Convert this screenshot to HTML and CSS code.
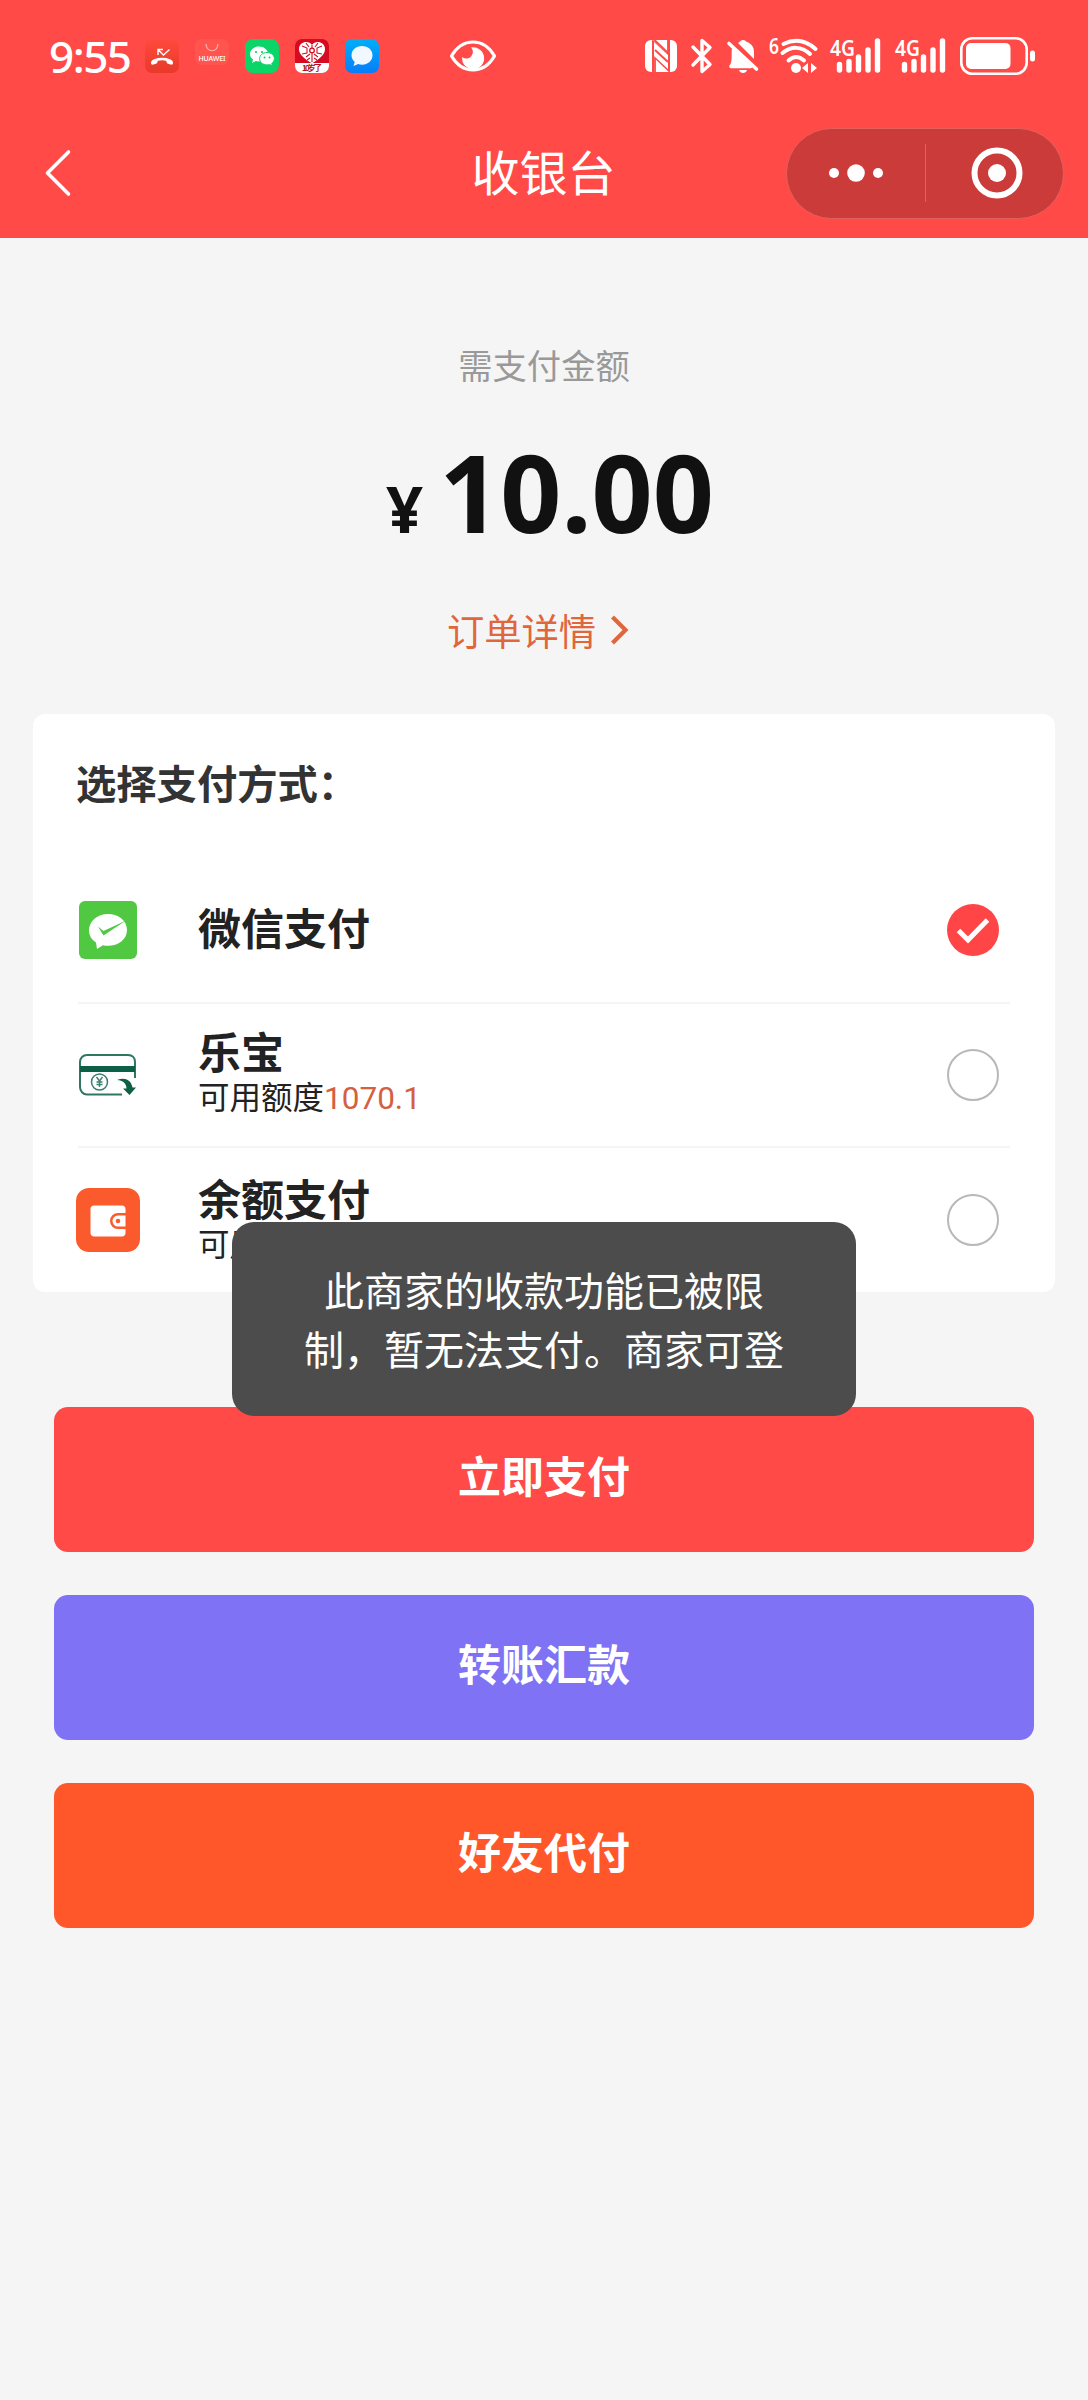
FILE: index.html
```html
<!DOCTYPE html>
<html lang="zh-CN">
<head>
<meta charset="utf-8">
<title>收银台</title>
<link rel="stylesheet" href="styles.css">
</head>
<body>
<header class="top">
  <div class="status">
    <span class="time">9:55</span>
    <div class="apps">
      <svg width="34" height="34" viewBox="0 0 34 34"><defs><linearGradient id="call" x2="0" y2="1"><stop offset="0" stop-color="#ff4a3c"/><stop offset="1" stop-color="#e8392a"/></linearGradient></defs><rect width="34" height="34" rx="7" fill="url(#call)"/><path d="M13 16V10.500h5M13.500 11l5 5 6-5.500" fill="none" stroke="#fff" stroke-width="1.400"/><path d="M6 24c0-2 1-3 3-3.800 5-1.800 11-1.800 16 0 2 .8 3 1.800 3 3.800 0 1.500-1 2-2.500 1.600l-2.500-.8c-1.500-.5-1.500-2.500-2-3-2.500-.8-5.500-.8-8 0-.5.5-.5 2.500-2 3l-2.500.8C7 26 6 25.500 6 24z" fill="#fff"/></svg>
      <svg width="34" height="34" viewBox="0 0 34 34"><rect width="34" height="26" rx="7" fill="#ff554e"/><path d="M11 5c1 9 11 9 12 0" fill="none" stroke="#ffb5b0" stroke-width="1.200"/><text class="brand" x="17" y="22" text-anchor="middle" textLength="27">HUAWEI</text></svg>
      <svg width="34" height="34" viewBox="0 0 34 34"><rect width="34" height="34" rx="8" fill="#0bd468"/><path d="M14 7.500c-5 0-9 3.300-9 7.500 0 2.300 1.200 4.200 3 5.600L7.200 24l3.500-1.900c1 .3 2.100.4 3.300.4 5 0 9-3.300 9-7.500s-4-7.500-9-7.500z" fill="#fff"/><path d="M22 13.500c-4.200 0-7.400 2.700-7.400 6.200s3.200 6.200 7.400 6.200c.9 0 1.800-.1 2.600-.4l2.800 1.500-.7-2.600c1.700-1.200 2.700-2.800 2.700-4.700 0-3.500-3.200-6.200-7.400-6.200z" fill="#fff" stroke="#0bd468"/><g fill="#0bd468"><circle cx="11" cy="13" r="1.100"/><circle cx="17" cy="13" r="1.100"/><circle cx="19.500" cy="18.500" r="1"/><circle cx="24.500" cy="18.500" r="1"/></g></svg>
      <svg width="34" height="34" viewBox="0 0 34 34"><rect width="34" height="34" rx="7" fill="#d60a20"/><path d="M0 24h34v3a7 7 0 0 1-7 7H7a7 7 0 0 1-7-7z" fill="#fff"/><path d="M17 6c3-5 13-3.500 13 4 0 6-6 10-13 14.500C10 20 4 16 4 10 4 2.500 14 1 17 6z" fill="#fff"/><path d="M17 6v4M17 14v9M7 7l5 2v5l-5 1M27 7l-5 2v5l5 1M11 4l3 4M23 4l-3 4M11 18l4-3M23 18l-4-3M12 21l3-2M22 21l-3-2" fill="none" stroke="#d60a20" stroke-width="1.100"/><circle cx="17" cy="11.500" r="2.300" fill="#fff" stroke="#d60a20" stroke-width="1.300"/><text class="badge" x="17" y="31.500" text-anchor="middle" textLength="20">10岁了</text></svg>
      <svg width="34" height="34" viewBox="0 0 34 34"><defs><linearGradient id="msg" x2="0" y2="1"><stop offset="0" stop-color="#00aef8"/><stop offset="1" stop-color="#087dfa"/></linearGradient></defs><rect width="34" height="34" rx="7" fill="url(#msg)"/><path d="M17 7c-6 0-10.500 4-10.500 9.300 0 3 1.300 5 3.200 6.700L8.500 27l4.700-1.900c1.200.4 2.500.6 3.800.6 6 0 10.500-4 10.500-9.400S23 7 17 7z" fill="#f1f8ff"/></svg>
    </div>
    <svg class="eye" width="48" height="34" viewBox="0 0 48 34"><path d="M2.500 17C8 7.500 15.500 3 24 3s16 4.500 21.500 14C40 26.500 32.500 31 24 31S8 26.500 2.500 17z" fill="none" stroke="#fff" stroke-width="3.200" stroke-linejoin="round"/><path d="M22 8.500a11 11 0 1 1-8.800 9.500 9 9 0 0 0 2.300 1.200 6.500 6.500 0 0 0 6.500-10.700z" fill="#fff"/></svg>
    <div class="signals">
      <svg class="nfc" width="32" height="34" viewBox="0 0 32 34"><rect y="1" width="32" height="32" rx="6" fill="#fff"/><path d="M8 33V2L23 16.500V1" fill="none" stroke="#ff4a48" stroke-width="1.800"/><path d="M9.500 1L24 15V32L10 18.500V33" fill="none" stroke="#ff4a48" stroke-width="1.800"/><path d="M9 3l14 13v14L9 17z" fill="#fff"/><path d="M8 2v31M24 1v31M10 11l13 12" fill="none" stroke="#ff4a48" stroke-width="2"/></svg>
      <svg class="bt" width="24" height="36" viewBox="0 0 24 36"><path d="M3 9l17 17.500-8 7V2.500l8 7L3 27" fill="none" stroke="#fff" stroke-width="3.400" stroke-linejoin="round" stroke-linecap="round"/></svg>
      <svg class="bell" width="32" height="36" viewBox="0 0 32 36"><path d="M5 10C4 17 6 22 2.500 28H24z" fill="#fff"/><path d="M11 5c2-1.500 3-3 5-3s2.500 1 3.500 1.800c5 1.700 7.500 5.500 7.500 10.200v7z" fill="#fff"/><path d="M12 32h8c-.8 4-7.200 4-8 0z" fill="#fff"/><path d="M2 5.500L29.500 31" stroke="#fff" stroke-width="3.600" stroke-linecap="round"/><path d="M4 28.500h20" stroke="#fff" stroke-width="3.500" stroke-linecap="round"/><path d="M5.500 4L31 27.500" stroke="#ff4a48" stroke-width="2"/></svg>
      <svg class="wifi" width="52" height="38" viewBox="0 0 52 38"><text class="net" x="0" y="17" textLength="10" lengthAdjust="spacingAndGlyphs">6</text><g fill="none" stroke="#fff" stroke-width="4" stroke-linecap="round"><path d="M14.500 7c10.500-5 22-4 32 5"/><path d="M13.500 16c8.500-7 19-7 27.500 1"/><path d="M19.500 23.500c5-4.500 10.500-4.500 15.500 0"/></g><circle cx="27" cy="31" r="5" fill="#fff"/><path d="M39 26v10l-6-5zM42 26v10l6-5z" fill="#fff"/></svg>
      <svg class="cell" width="54" height="38" viewBox="0 0 54 38"><text class="net" x="1" y="18.500" textLength="25" lengthAdjust="spacingAndGlyphs">4G</text><path d="M10.500 27.500V33M20 24.500V33M29.500 20V33M39 13V33M48.500 4V33" stroke="#fff" stroke-width="5.400" stroke-linecap="round"/></svg>
      <svg class="cell" width="54" height="38" viewBox="0 0 54 38"><text class="net" x="1" y="18.500" textLength="25" lengthAdjust="spacingAndGlyphs">4G</text><path d="M10.500 27.500V33M20 24.500V33M29.500 20V33M39 13V33M48.500 4V33" stroke="#fff" stroke-width="5.400" stroke-linecap="round"/></svg>
      <svg class="battery" width="76" height="38" viewBox="0 0 76 38"><rect x="1.300" y="1.300" width="65.400" height="35.400" rx="11" fill="none" stroke="#fff" stroke-width="2.600"/><rect x="6" y="6" width="44.500" height="26" rx="5" fill="#fff"/><rect x="70" y="13.500" width="5" height="11" rx="2.500" fill="#fff"/></svg>
    </div>
  </div>
  <nav class="nav">
    <svg class="back" width="28" height="48" viewBox="0 0 28 48"><path d="M25.500 3L4.500 24l21 21" fill="none" stroke="#fff" stroke-width="3.600" stroke-linecap="round" stroke-linejoin="round"/></svg>
    <h1 class="nav-title">收银台</h1>
    <div class="capsule">
      <svg width="138" height="60" viewBox="0 0 138 60" fill="#fff"><circle cx="47" cy="30" r="5"/><circle cx="69" cy="30" r="8.800"/><circle cx="91" cy="30" r="5"/></svg>
      <i class="split"></i>
      <svg width="136" height="60" viewBox="0 0 136 60"><circle cx="71" cy="30" r="22.500" fill="none" stroke="#fff" stroke-width="6"/><circle cx="71" cy="30" r="9" fill="#fff"/></svg>
    </div>
  </nav>
</header>
<main class="page">
  <section class="amount">
    <p class="label">需支付金额</p>
    <p class="price"><span class="yen">¥</span><span class="num">10.00</span></p>
    <a class="detail">订单详情<svg width="18" height="30" viewBox="0 0 18 30"><path d="M2.500 2L15.500 15 2.500 28" fill="none" stroke="#e0663c" stroke-width="4.200"/></svg></a>
  </section>
  <section class="card">
    <h2 class="card-title">选择支付方式：</h2>
    <div class="row row-wechat">
      <div class="icon"><svg width="58" height="58" viewBox="0 0 58 58"><rect width="58" height="58" rx="6" fill="#50c842"/><path d="M29 13C18.500 13 10 20 10 29.500c0 5 2.500 9 7 12L18 48l6-3.800c1.600.4 3.300.6 5 .6 10.500 0 19-6.500 19-15.800S39.500 13 29 13z" fill="#fff"/><path d="M19 25.500l5.500 4.500L47 19.500 24.500 34.500z" fill="#50c842"/></svg></div>
      <div class="info"><p class="name">微信支付</p></div>
      <svg class="radio" width="52" height="52" viewBox="0 0 52 52"><circle cx="26" cy="26" r="26" fill="#ff4545"/><path d="M11.500 26.500L21 36 40.500 16" fill="none" stroke="#fff" stroke-width="5"/></svg>
    </div>
    <div class="row row-lebao">
      <div class="icon"><svg width="58" height="42" viewBox="0 0 58 42" fill="none"><path d="M56 24V8c0-4-2.500-7-7-7H8C4 1 1 4 1 8v25c0 4 3 7.500 7 7.500h35" stroke="#2d7763" stroke-width="2"/><path d="M1 12h55v6H1z" fill="#0c6046"/><circle cx="20.500" cy="28" r="8" stroke="#3b7f6c" stroke-width="1.500"/><path d="M17.500 23l3 4 3-4M20.500 27v6M17.500 28h6M17.500 30.500h6" stroke="#3b7f6c" stroke-width="1.400"/><path d="M38 26c7-3 14-1 15.500 7.500H57L50.500 41 44 34.500h3.500c0-5-3.500-8-9.500-8.500z" fill="#0c6046"/></svg></div>
      <div class="info"><p class="name">乐宝</p><p class="sub">可用额度<span class="quota">1070.1</span></p></div>
      <i class="radio ring"></i>
    </div>
    <div class="row row-balance">
      <div class="icon"><svg width="64" height="64" viewBox="0 0 64 64"><rect width="64" height="64" rx="13" fill="#fb5a2c"/><path d="M18 17.500h28c2 0 3.500 1.500 3.500 3.500v4h-7.500a8 8 0 0 0 0 16h7.500v4c0 2-1.500 3.500-3.500 3.500H18c-2 0-3.500-1.500-3.500-3.500V21c0-2 1.500-3.500 3.500-3.500z" fill="#fff"/><path d="M49.500 27.500H42a5.500 5.500 0 0 0 0 11h7.500z" fill="#fff"/><circle cx="42" cy="33" r="2.300" fill="#fb5a2c"/></svg></div>
      <div class="info"><p class="name">余额支付</p><p class="sub">可用</p></div>
      <i class="radio ring"></i>
    </div>
  </section>
  <section class="actions">
    <button class="btn pay">立即支付</button>
    <button class="btn transfer">转账汇款</button>
    <button class="btn friend">好友代付</button>
  </section>
</main>
<div class="toast">此商家的收款功能已被限<br>制，暂无法支付。商家可登</div>
</body>
</html>
```
FILE: styles.css
```css
* { box-sizing: border-box; margin: 0; padding: 0; }
body {
  position: relative;
  width: 1088px;
  height: 2400px;
  background: #f5f5f5;
  font-family: "Noto Sans CJK SC", sans-serif;
  color: #222;
}
svg { display: block; flex: none; overflow: visible; }

.top { height: 238px; background: #ff4a48; color: #fff; }
.status { display: flex; align-items: center; height: 110px; padding: 2px 52px 0 49px; }
.time { width: 96px; font: 500 44px/60px "Noto Sans", sans-serif; letter-spacing: -1.5px; }
.apps { display: flex; gap: 16px; }
.brand { font: 500 7px "Noto Sans", sans-serif; fill: #fff; }
.badge { font: 700 8px "Noto Sans CJK SC", sans-serif; fill: #b01020; }
.eye { margin-left: 70px; }
.signals { display: flex; align-items: center; margin-left: auto; }
.bt { margin-left: 13px; }
.bell { margin-left: 13px; }
.wifi { margin-left: 10px; }
.net { font: 600 22px "Noto Sans", sans-serif; fill: #fff; }
.cell { margin-left: 8px; width: 54px; }
.cell + .cell { margin-left: 11px; }
.battery { margin-left: 12px; }

.nav { display: grid; grid-template-columns: 1fr auto 1fr; align-items: center; height: 126px; padding: 0 24px 0 43px; }
.nav-title { font-size: 48px; font-weight: 400; line-height: 70px; margin: 0 0 6px -20px; }
.capsule {
  display: flex; align-items: center; justify-self: end;
  width: 278px; height: 91px; border-radius: 46px;
  background: #ca3b39; border: 1px solid #e4605c;
}
.split { width: 1px; height: 58px; background: #e0625d; }

.amount { display: flex; flex-direction: column; align-items: center; height: 476px; padding-top: 101px; }
.label { color: #999; font-size: 34.300px; line-height: 50px; }
.price { display: flex; align-items: baseline; gap: 16px; margin: 28px 0 0 12px; height: 150px; font-family: "Noto Sans", sans-serif; font-weight: 700; line-height: 150px; color: #111; }
.yen { font-size: 65px; }
.num { font-size: 107px; }
.detail { display: flex; align-items: center; gap: 14px; margin: 38px 13px 0 0; color: #e0663c; font-size: 37.300px; line-height: 50px; }

.card { width: 1022px; height: 578px; margin: 0 33px; padding: 39px 45px 0; background: #fff; border-radius: 12px; }
.card-title { margin-left: -2px; font-size: 40.300px; font-weight: 700; line-height: 58px; color: #333; }
.row { display: flex; align-items: center; height: 144px; }
.row-wechat { margin-top: 47px; }
.row + .row { border-top: 2px solid #f5f5f5; }
.row-balance { height: 146px; }
.icon { display: flex; justify-content: center; width: 60px; margin-right: 60px; }
.info { flex: 1; padding-bottom: 6px; }
.row-wechat .info { padding-bottom: 9px; }
.name { font-size: 43px; font-weight: 700; line-height: 50px; }
.sub { font-size: 31.500px; line-height: 40px; }
.quota { font-family: Roboto, sans-serif; color: #d4603f; }
.radio { width: 52px; height: 52px; margin-right: 11px; }
.ring { border: 2px solid #b8b8b8; border-radius: 50%; }

.actions { display: flex; flex-direction: column; gap: 43px; padding: 115px 54px 0; }
.btn {
  height: 145px; border: 0; border-radius: 14px; padding-bottom: 11px;
  color: #fff; font: 700 43px/60px "Noto Sans CJK SC", sans-serif;
}
.pay { background: #ff4a48; }
.transfer { background: #7f72f5; }
.friend { background: #ff572a; }

.toast {
  position: absolute; left: 232px; top: 1222px;
  width: 624px; height: 194px; padding: 38px 0; border-radius: 22px;
  background: #4c4c4c; color: #fff; text-align: center;
  font-size: 40px; line-height: 59px;
}
```
